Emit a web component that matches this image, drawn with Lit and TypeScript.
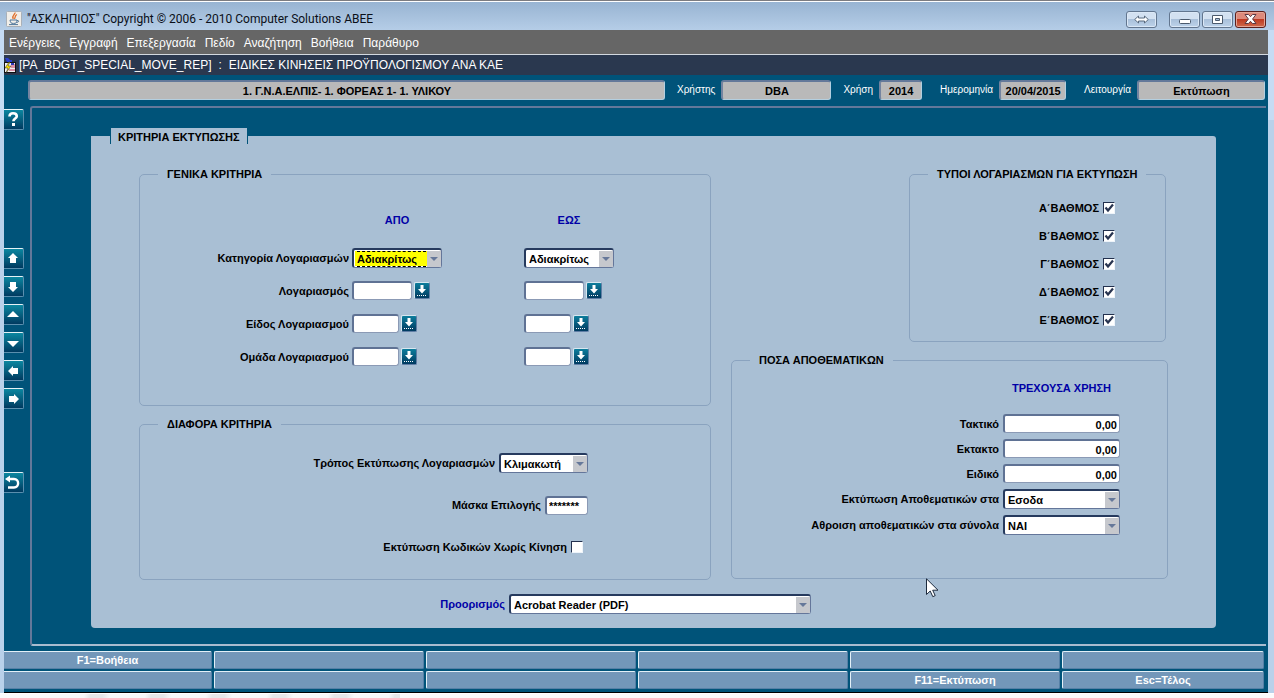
import { LitElement, html, css, svg } from "lit";
import { customElement, property } from "lit/decorators.js";
import { classMap } from "lit/directives/class-map.js";

const MENUS = ["Ενέργειες", "Εγγραφή", "Επεξεργασία", "Πεδίο", "Αναζήτηση", "Βοήθεια", "Παράθυρο"];

const RAIL = [
  { name: "Βοήθεια", group: "help", icon: svg`<path d="M5.500 7.500C5.500 5 7 4.200 9 4.200C11.300 4.200 12.800 5.200 12.800 7.200C12.800 9.500 9.400 9.600 9.400 12.200" fill="none" stroke="#fff" stroke-width="2.600"/><rect x="8" y="14" width="3" height="3" fill="#fff"/>` },
  { name: "Προηγούμενο μπλοκ", group: "nav", icon: svg`<path d="M9 5L14 10H12V15H6V10H4Z" fill="#fff"/>` },
  { name: "Επόμενο μπλοκ", group: "", icon: svg`<path d="M9 16L4 11H6V6H12V11H14Z" fill="#fff"/>` },
  { name: "Προηγούμενη εγγραφή", group: "", icon: svg`<path d="M9 7L15 13H3Z" fill="#fff"/>` },
  { name: "Επόμενη εγγραφή", group: "", icon: svg`<path d="M9 15L3 9H15Z" fill="#fff"/>` },
  { name: "Προηγούμενο πεδίο", group: "", icon: svg`<path d="M4 11L9 6V8H14V14H9V16Z" fill="#fff"/>` },
  { name: "Επόμενο πεδίο", group: "", icon: svg`<path d="M15 11L10 6V8H5V14H10V16Z" fill="#fff"/>` },
  { name: "Έξοδος", group: "exit", icon: svg`<path d="M4 7H10C15.500 7 15.500 15.500 10 15.500H4" fill="none" stroke="#fff" stroke-width="2.400"/><path d="M1 7L6 3.500V10.500Z" fill="#fff"/>` },
];

const KEYS = ["F1=Βοήθεια", "", "", "", "", "", "", "", "", "", "F11=Εκτύπωση", "Esc=Τέλος"];
const GRADES = ["Α΄ΒΑΘΜΟΣ", "Β΄ΒΑΘΜΟΣ", "Γ΄ΒΑΘΜΟΣ", "Δ΄ΒΑΘΜΟΣ", "Ε΄ΒΑΘΜΟΣ"];
const AMOUNTS = ["Τακτικό", "Εκτακτο", "Ειδικό"];
const RANGES = [
  { label: "Λογαριασμός", id: "account", wide: true },
  { label: "Είδος Λογαριασμού", id: "kind", wide: false },
  { label: "Ομάδα Λογαριασμού", id: "team", wide: false },
];

const fields = css`
  input,
  select,
  button {
    box-sizing: border-box;
    margin: 0;
    font: inherit;
    color: inherit;
    border-radius: 2px;
  }
  input.text {
    height: 19px;
    padding: 1px 2px 0;
    color: #000;
    background: #fff;
    border: 1px solid #8b9ab5;
    border-top: 2px solid #5f7294;
    border-left: 2px solid #5f7294;
    border-radius: 3px;
  }
  input.tick {
    appearance: none;
    width: 12px;
    height: 12px;
    background: #fff;
    border: 1px solid #eef4fa;
    border-top-color: #22304e;
    border-left-color: #22304e;
    border-radius: 0;
  }
  input.tick:checked {
    background: #fff
      url("data:image/svg+xml,%3Csvg xmlns='http://www.w3.org/2000/svg' viewBox='0 0 10 10'%3E%3Cpath d='M1.500 4.500L4 7.500L9 1.500' fill='none' stroke='%23283450' stroke-width='2.200'/%3E%3C/svg%3E")
      center / 10px 10px no-repeat;
  }
`;

@customElement("combo-box")
export class ComboBox extends LitElement {
  @property() value = "";
  @property() label = "";
  @property({ type: Boolean }) current = false;

  static styles = [
    fields,
    css`
      :host {
        display: grid;
        height: 20px;
      }
      select,
      .arrow {
        grid-area: 1 / 1;
      }
      select {
        appearance: none;
        width: 100%;
        height: 100%;
        padding: 1px 16px 0 3px;
        color: #000;
        background: #fff;
        border: 1px solid #64769a;
        border-top: 2px solid #263a5e;
        border-left: 2px solid #263a5e;
        border-radius: 3px;
        outline: none;
      }
      select.current {
        background: linear-gradient(#ff0, #ff0) 1px 1px / calc(100% - 13px) 15px no-repeat #fff;
      }
      .mark {
        grid-area: 1 / 1;
        margin: 3px 16px 1px 5px;
        border-top: 1px dashed #000;
        border-bottom: 1px dashed #000;
        pointer-events: none;
      }
      .arrow {
        justify-self: end;
        width: 14px;
        margin: 3px 1px 1px;
        background: #c6c8cd;
        pointer-events: none;
        display: grid;
        place-items: center;
      }
    `,
  ];

  render() {
    return html`
      <select class=${classMap({ current: this.current })} aria-label=${this.label}>
        <option>${this.value}</option>
      </select>
      ${this.current ? html`<span class="mark"></span>` : ""}
      <span class="arrow"><svg width="8" height="4" viewBox="0 0 8 4"><path d="M0 0H8L4 4Z" fill="#66789a" /></svg></span>
    `;
  }
}

@customElement("title-bar")
export class TitleBar extends LitElement {
  static styles = css`
    :host {
      display: flex;
      align-items: center;
      height: 28px;
      padding: 0 8px 0 6px;
      font: 12px/16px Roboto, sans-serif;
      color: #0a0f18;
      background: linear-gradient(#98b4d2, #b5cde7);
      border-top: 1px solid #fff;
    }
    .title {
      flex: 1;
      padding: 6px 0 0 5px;
    }
    .logo {
      margin-top: 6px;
    }
    button {
      box-sizing: border-box;
      width: 31px;
      height: 17px;
      margin: 6px 0 0 2px;
      padding: 0;
      display: grid;
      place-items: center;
      background: linear-gradient(#d3e1f1 45%, #a9c0da 50%, #bdd3ea);
      border: 1px solid #62768f;
      border-radius: 3px;
      box-shadow: inset 0 0 0 1px #dbe8f6;
    }
    .swap {
      margin-right: 10px;
    }
    .close {
      background: linear-gradient(#dd8a7b 45%, #bf3a22 50%, #cf6a4c);
      border-color: #5c1f1c;
      box-shadow: inset 0 0 0 1px #e4a596;
    }
  `;

  render() {
    return html`
      <svg class="logo" width="16" height="16" viewBox="0 0 16 16">
        <rect x="0.500" y="0.500" width="15" height="15" rx="1" fill="#f1eee9" stroke="#a9b0b8" />
        <path d="M9 1.500C9.500 3.500 5.500 4 7.200 8M11 3.500C8.500 4.500 9.800 6 8.400 8" fill="none" stroke="#e0702c" stroke-width="1.300" />
        <path d="M4 9H11C11 12 10 12.400 7.500 12.400S4.500 12 4 9M11 9.500C13.500 9 13 11.500 10.500 11.500M3 13.600H12" fill="none" stroke="#50779b" />
      </svg>
      <span class="title">"ΑΣΚΛΗΠΙΟΣ" Copyright © 2006 - 2010 Computer Solutions ABEE</span>
      <button class="swap" aria-label="Εναλλαγή">
        <svg width="15" height="9" viewBox="0 0 15 9"><path d="M0.700 4.500L4.500 1V3H10.500V1L14.300 4.500L10.500 8V6H4.500V8Z" fill="#fff" stroke="#596a7e" /></svg>
      </button>
      <button aria-label="Ελαχιστοποίηση">
        <svg width="12" height="9" viewBox="0 0 12 9"><rect x="0.500" y="4.500" width="11" height="4" rx="1" fill="#fff" stroke="#4b5a6d" /></svg>
      </button>
      <button aria-label="Μεγιστοποίηση">
        <svg width="11" height="9" viewBox="0 0 11 9"><path d="M0.500 0.500H10.500V8.500H0.500ZM3.500 3.500V5.500H7.500V3.500Z" fill="#fff" fill-rule="evenodd" stroke="#4b5a6d" /></svg>
      </button>
      <button class="close" aria-label="Κλείσιμο">
        <svg width="13" height="10" viewBox="0 0 13 10"><path d="M1 0.500H4.500L6.500 2.700L8.500 0.500H12L8.600 5L12 9.500H8.500L6.500 7.300L4.500 9.500H1L4.400 5Z" fill="#fff" stroke="#5b3a44" /></svg>
      </button>
    `;
  }
}

@customElement("app-root")
export class AppRoot extends LitElement {
  static styles = [
    fields,
    css`
      :host {
        display: block;
        font: bold 11px/14px "Liberation Sans", sans-serif;
        color: #000;
      }
      .window {
        min-height: 100vh;
        box-sizing: border-box;
        display: flex;
        flex-direction: column;
        background: #fbfbfc;
        border-top: 1px solid #7c7c80;
      }
      .frame {
        padding: 0 6px 0 4px;
        background: linear-gradient(#c6dcf4 90px, #b9d1ea 90px);
      }
      .menu {
        display: flex;
        gap: 9px;
        height: 24px;
        padding-left: 5px;
        font-weight: normal;
        font-size: 12px;
        color: #fff;
        background: #666;
        border-bottom: 1px solid #d3d9e0;
      }
      .menu button {
        padding: 2px 0 0;
        border: 0;
        background: none;
      }
      .caption {
        display: flex;
        align-items: center;
        gap: 7px;
        height: 20px;
        font-weight: normal;
        font-size: 12px;
        color: #fff;
        background: #2a384f;
      }
      .caption .name {
        display: flex;
        align-items: center;
        gap: 3px;
      }
      .app {
        background: #005379;
      }
      .status {
        display: flex;
        align-items: center;
        height: 30px;
        padding: 0 3px 1px 24px;
      }
      .status input {
        height: 20px;
        padding: 0;
        min-width: 0;
        text-align: center;
        background: #b9b9b9;
        border: 1px solid #b3cfe0;
        border-top: 2px solid #64799a;
        border-left: 2px solid #7484a0;
        border-radius: 3px;
      }
      .status label {
        padding: 0 6px 0 12px;
        font-weight: normal;
        font-size: 10px;
        color: #fff;
      }
      .status .apart {
        padding-left: 18px;
      }
      .status .org {
        flex: 1;
      }
      .status .user {
        width: 110px;
      }
      .status .year {
        width: 43px;
      }
      .status .date {
        width: 67px;
      }
      .status .mode {
        width: 128px;
      }
      .work {
        display: flex;
        padding-right: 2px;
      }
      .rail {
        width: 26px;
        display: flex;
        flex-direction: column;
        gap: 7px;
      }
      .rail button {
        width: 20px;
        height: 21px;
        padding: 0;
        background: linear-gradient(#0b87a0, #003a60);
        border: 1px solid #5b8fae;
        border-top-color: #e6f2f6;
        border-left: 0;
        border-radius: 0 2px 2px 0;
      }
      .rail svg {
        display: block;
      }
      .rail .help {
        margin: 3px 0 111px;
      }
      .rail .exit {
        margin-top: 56px;
      }
      .canvas {
        flex: 1;
        padding: 20px 50px 16px 59px;
        border: 2px solid #63789a;
        border-right: 0;
        border-bottom: 2px solid #a9bccf;
        border-radius: 3px 0 0 3px;
      }
      .tab {
        position: relative;
        width: max-content;
        height: 16px;
        margin: 0 0 -8px 19px;
        padding: 0 7px;
        line-height: 18px;
        background: #a9bfd4;
        border: 1px solid #005379;
        border-width: 0 1px;
      }
      .page {
        display: grid;
        grid-template-columns: 572fr 437fr;
        column-gap: 20px;
        padding: 30px 48px 6px;
        background: #a9bfd4;
        border-radius: 0 3px 4px 4px;
      }
      .column {
        display: flex;
        flex-direction: column;
        gap: 10px;
      }
      fieldset {
        margin: 0;
        min-width: 0;
        padding: 0;
        border: 1px solid #8aa3bf;
        border-radius: 5px;
      }
      legend {
        margin-left: 18px;
        padding: 0 9px;
        line-height: 16px;
      }
      .general {
        display: grid;
        grid-template-columns: 209px 90px 76px 90px;
        grid-template-rows: 28px;
        grid-auto-rows: 33px;
        column-gap: 3px;
        align-items: center;
        padding: 31px 0 32px;
      }
      .general .end {
        grid-column: 1;
      }
      .general .from {
        grid-column: 2;
      }
      .general .until {
        grid-column: 4;
      }
      .general .head {
        align-self: start;
      }
      .head {
        text-align: center;
        color: #0000a6;
      }
      .end {
        text-align: right;
      }
      .lookup {
        display: flex;
        gap: 2px;
      }
      .lookup input {
        width: 47px;
      }
      .lookup .wide {
        width: 60px;
      }
      .lookup button {
        width: 16px;
        height: 17px;
        margin-top: 1px;
        padding: 0;
        background: linear-gradient(#0d7d9c, #003a60);
        border: 1px solid #5f7da4;
        border-top-color: #d8e8f0;
        border-left-color: #d8e8f0;
      }
      .lookup svg {
        display: block;
      }
      .row {
        display: flex;
        align-items: center;
        justify-content: flex-end;
        gap: 4px;
      }
      .various {
        padding: 10px 122px 11px 0;
      }
      .various .row {
        height: 42px;
      }
      .various .blank {
        padding-right: 5px;
      }
      .mode-box {
        width: 89px;
      }
      .mask {
        width: 43px;
      }
      .grades {
        align-self: flex-end;
        width: 257px;
        box-sizing: border-box;
        margin-right: 2px;
      }
      .grades .rows {
        padding: 12px 50px 7px 0;
      }
      .grades .row {
        height: 28px;
      }
      .amounts {
        padding: 13px 47px 40px 0;
      }
      .amounts .head {
        width: 117px;
        margin: 0 0 16px auto;
      }
      .amounts .row {
        height: 25px;
      }
      .amounts .pick {
        height: 26px;
      }
      .amounts input,
      .amounts combo-box {
        width: 117px;
      }
      .amounts input {
        text-align: right;
      }
      .target {
        grid-column: 1 / -1;
        justify-content: flex-start;
        padding-top: 6px;
        height: 36px;
      }
      .target .end {
        width: 366px;
        color: #0000a6;
      }
      .target combo-box {
        width: 302px;
      }
      .keys {
        display: grid;
        grid-template-columns: 208fr 210fr 210fr 210fr 210fr 202fr;
        gap: 2px;
        padding: 5px 4px 3px 0;
        border-bottom: 1px solid #000;
      }
      .keys button {
        height: 18px;
        padding: 0;
        color: #fff;
        background: #7397b9;
        border: 1px solid #5680a6;
        border-top-color: #e3f0f8;
        border-left-color: #e3f0f8;
      }
      .keys button:nth-child(6n + 1) {
        border-left: 0;
        border-radius: 0 2px 2px 0;
      }
      .desk {
        flex: 1;
        border-top: 1px solid #fff;
        background: repeating-linear-gradient(100deg, #f8f8f9 0 34px, #e6e6e8 40px 52px, #f8f8f9 60px) 50px 0 / 350px 100% no-repeat;
      }
      .pointer {
        position: absolute;
        left: 926px;
        top: 578px;
        pointer-events: none;
      }
    `,
  ];

  private lookup(id: string, label: string, wide: boolean, column: string) {
    return html`<div class="lookup ${column}">
      <input id=${id} class=${classMap({ text: true, wide })} type="text" aria-label=${label} />
      <button aria-label="Λίστα τιμών">
        <svg width="14" height="15" viewBox="0 0 14 15">
          <path d="M5.500 2H8.500V6H11L7 10.500L3 6H5.500Z" fill="#fff" />
          <path d="M2 12.500H12" stroke="#fff" stroke-dasharray="1 1" />
        </svg>
      </button>
    </div>`;
  }

  render() {
    return html`
      <div class="window">
        <title-bar></title-bar>
        <div class="frame">
          <nav class="menu">${MENUS.map((m) => html`<button>${m}</button>`)}</nav>
          <div class="app">
            <div class="caption">
              <span class="name">
                <svg width="12" height="17" viewBox="0 0 12 17">
                  <path d="M1 1H4L6 3H8V5H3Z" fill="#2a3fd0" />
                  <rect x="0.500" y="5.500" width="11" height="10" fill="#f3f0f4" stroke="#111" />
                  <path d="M7 8H11M7 10H11M5 13H11" stroke="#c22f55" />
                  <path d="M5 5L1 11H4L2 16L7 9H4L6 5Z" fill="#ffe600" stroke="#222" stroke-width="0.500" />
                  <rect x="7" y="6" width="3" height="2" fill="#2b39b5" />
                </svg>
                [PA_BDGT_SPECIAL_MOVE_REP]
              </span>
              <span>:</span>
              <span>ΕΙΔΙΚΕΣ ΚΙΝΗΣΕΙΣ ΠΡΟΫΠΟΛΟΓΙΣΜΟΥ ΑΝΑ ΚΑΕ</span>
            </div>
            <div class="status">
              <input class="org" readonly aria-label="Φορέας" value="1. Γ.Ν.Α.ΕΛΠΙΣ- 1. ΦΟΡΕΑΣ 1- 1. ΥΛΙΚΟΥ" />
              <label for="user">Χρήστης</label><input id="user" class="user" readonly value="DBA" />
              <label for="year">Χρήση</label><input id="year" class="year" readonly value="2014" />
              <label class="apart" for="date">Ημερομηνία</label><input id="date" class="date" readonly value="20/04/2015" />
              <label class="apart" for="mode">Λειτουργία</label><input id="mode" class="mode" readonly value="Εκτύπωση" />
            </div>
            <div class="work">
              <div class="rail">
                ${RAIL.map((b) => html`<button class=${b.group} aria-label=${b.name}><svg width="19" height="19" viewBox="0 1 19 19">${b.icon}</svg></button>`)}
              </div>
              <main class="canvas">
                <div class="tab">ΚΡΙΤΗΡΙΑ ΕΚΤΥΠΩΣΗΣ</div>
                <div class="page">
                  <div class="column">
                    <fieldset>
                      <legend>ΓΕΝΙΚΑ ΚΡΙΤΗΡΙΑ</legend>
                      <div class="general">
                        <span class="head from">ΑΠΟ</span>
                        <span class="head until">ΕΩΣ</span>
                        <span class="end">Κατηγορία Λογαριασμών</span>
                        <combo-box class="from" current label="Κατηγορία Λογαριασμών από" value="Αδιακρίτως"></combo-box>
                        <combo-box class="until" label="Κατηγορία Λογαριασμών έως" value="Αδιακρίτως"></combo-box>
                        ${RANGES.map(
                          (r) => html`<label class="end" for=${r.id}>${r.label}</label>
                            ${this.lookup(r.id, r.label + " από", r.wide, "from")}
                            ${this.lookup(r.id + "-to", r.label + " έως", r.wide, "until")}`
                        )}
                      </div>
                    </fieldset>
                    <fieldset>
                      <legend>ΔΙΑΦΟΡΑ ΚΡΙΤΗΡΙΑ</legend>
                      <div class="various">
                        <div class="row">
                          <span>Τρόπος Εκτύπωσης Λογαριασμών</span>
                          <combo-box class="mode-box" label="Τρόπος Εκτύπωσης Λογαριασμών" value="Κλιμακωτή"></combo-box>
                        </div>
                        <div class="row">
                          <label for="mask">Μάσκα Επιλογής</label>
                          <input id="mask" class="text mask" type="text" value="*******" />
                        </div>
                        <div class="row blank">
                          <label for="idle">Εκτύπωση Κωδικών Χωρίς Κίνηση</label>
                          <input id="idle" class="tick" type="checkbox" />
                        </div>
                      </div>
                    </fieldset>
                  </div>
                  <div class="column">
                    <fieldset class="grades">
                      <legend>ΤΥΠΟΙ ΛΟΓΑΡΙΑΣΜΩΝ ΓΙΑ ΕΚΤΥΠΩΣΗ</legend>
                      <div class="rows">
                        ${GRADES.map(
                          (g, i) => html`<div class="row">
                            <label for="grade-${i}">${g}</label>
                            <input id="grade-${i}" class="tick" type="checkbox" checked />
                          </div>`
                        )}
                      </div>
                    </fieldset>
                    <fieldset>
                      <legend>ΠΟΣΑ ΑΠΟΘΕΜΑΤΙΚΩΝ</legend>
                      <div class="amounts">
                        <div class="head">ΤΡΕΧΟΥΣΑ ΧΡΗΣΗ</div>
                        ${AMOUNTS.map(
                          (a, i) => html`<div class="row">
                            <label for="amount-${i}">${a}</label>
                            <input id="amount-${i}" class="text" type="text" value="0,00" />
                          </div>`
                        )}
                        <div class="row pick">
                          <span>Εκτύπωση Αποθεματικών στα</span>
                          <combo-box label="Εκτύπωση Αποθεματικών στα" value="Εσοδα"></combo-box>
                        </div>
                        <div class="row pick">
                          <span>Αθροιση αποθεματικών στα σύνολα</span>
                          <combo-box label="Αθροιση αποθεματικών στα σύνολα" value="ΝΑΙ"></combo-box>
                        </div>
                      </div>
                    </fieldset>
                  </div>
                  <div class="row target">
                    <span class="end">Προορισμός</span>
                    <combo-box label="Προορισμός" value="Acrobat Reader (PDF)"></combo-box>
                  </div>
                </div>
              </main>
            </div>
            <div class="keys">${KEYS.map((k) => html`<button>${k}</button>`)}</div>
          </div>
        </div>
        <div class="desk"></div>
        <svg class="pointer" width="13" height="20" viewBox="0 0 13 20">
          <path d="M0.500 0.800V16.500L4.200 13L6.800 18.700L9.200 17.600L6.700 12.200H12Z" fill="#fff" stroke="#1d2a3d" />
        </svg>
      </div>
    `;
  }
}
